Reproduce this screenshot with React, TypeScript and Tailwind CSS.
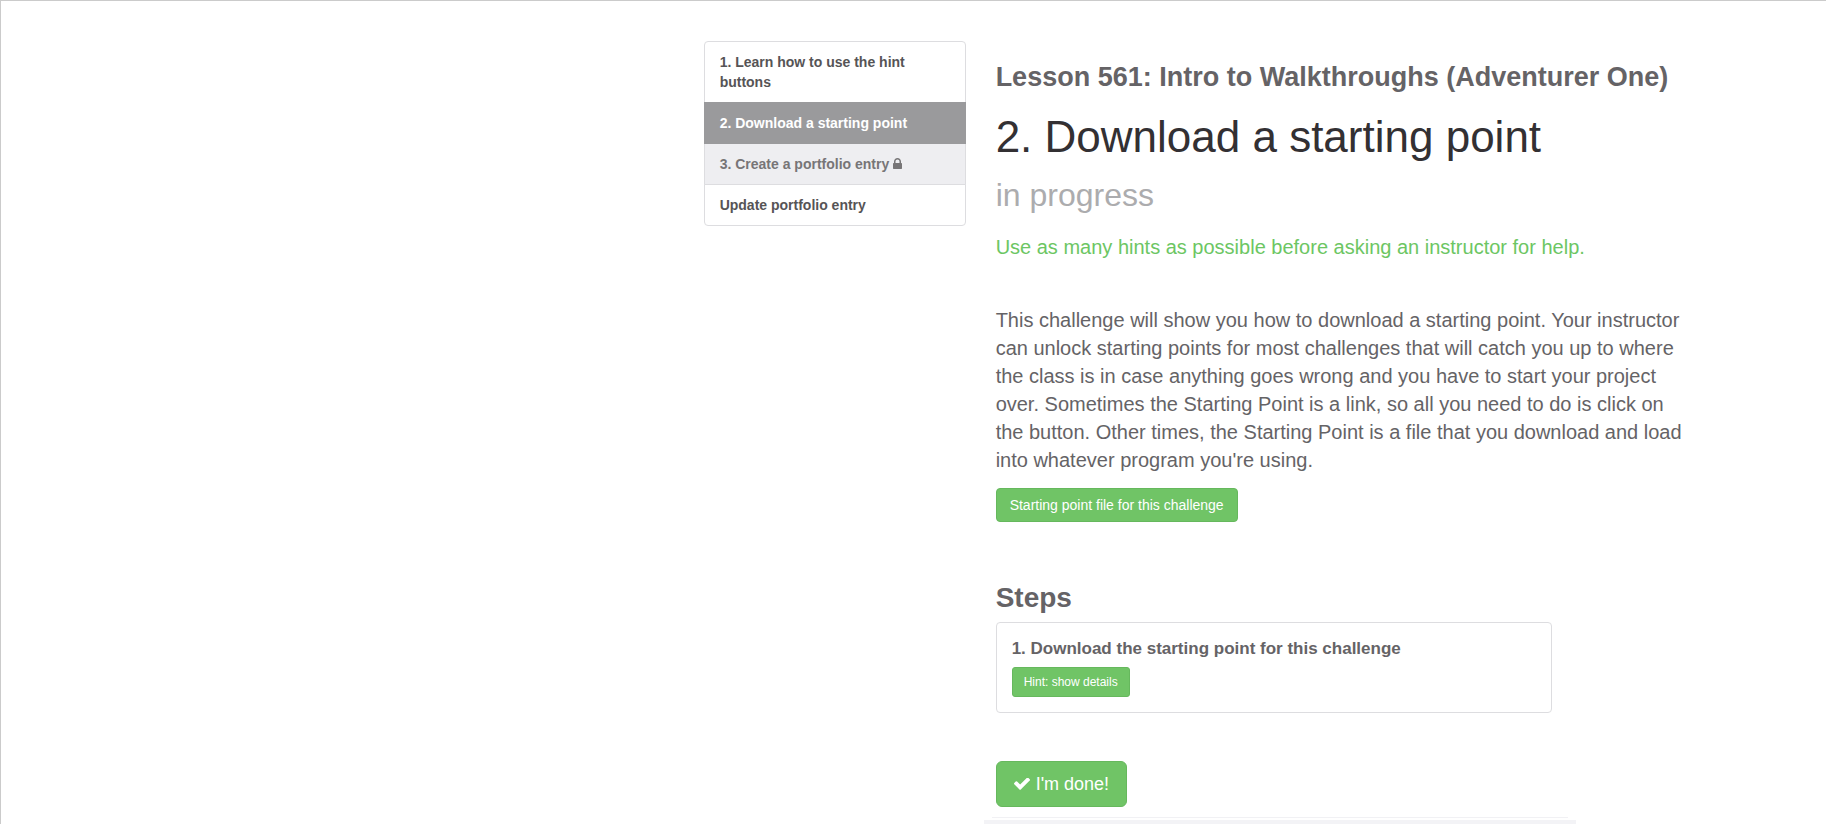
type Challenge = {
  label: string;
  state: "open" | "active" | "locked";
};

const challenges: Challenge[] = [
  { label: "1. Learn how to use the hint buttons", state: "open" },
  { label: "2. Download a starting point", state: "active" },
  { label: "3. Create a portfolio entry", state: "locked" },
  { label: "Update portfolio entry", state: "open" },
];

const itemStyles: Record<Challenge["state"], string> = {
  open: "border-[#dddde0] bg-white text-[#565456]",
  active: "relative border-[#9a9a9c] bg-[#9a9a9c] text-white",
  locked: "border-[#dddde0] bg-[#eeeef1] text-[#777577]",
};

function LockIcon() {
  return (
    <svg
      viewBox="320 128 1152 1408"
      fill="currentColor"
      aria-hidden="true"
      className="ml-1 inline h-[11px] w-[9px] align-baseline"
    >
      <path d="M640 768h512v-192q0-106-75-181t-181-75-181 75-75 181v192zm832 96v576q0 40-28 68t-68 28h-960q-40 0-68-28t-28-68v-576q0-40 28-68t68-28h32v-192q0-184 132-316t316-132 316 132 132 316v192h32q40 0 68 28t28 68z" />
    </svg>
  );
}

function CheckIcon() {
  return (
    <svg
      viewBox="121 402 1550 1120"
      fill="currentColor"
      aria-hidden="true"
      className="h-3 w-4"
    >
      <path d="M1671 566q0 40-28 68l-724 724-136 136q-28 28-68 28t-68-28l-136-136-362-362q-28-28-28-68t28-68l136-136q28-28 68-28t68 28l294 295 656-657q28-28 68-28t68 28l136 136q28 28 28 68z" />
    </svg>
  );
}

function ChallengeNav() {
  return (
    <nav className="w-[262px] shrink-0 pt-10">
      <ul>
        {challenges.map((challenge) => (
          <li key={challenge.label} className="group -mb-px">
            <a
              href="#"
              className={`block border px-[15px] py-2.5 text-sm leading-5 font-bold group-first:rounded-t group-last:rounded-b ${itemStyles[challenge.state]}`}
            >
              {challenge.label}
              {challenge.state === "locked" && <LockIcon />}
            </a>
          </li>
        ))}
      </ul>
    </nav>
  );
}

function Steps() {
  return (
    <section className="mt-15">
      <h3 className="text-[28px] leading-8 font-bold text-[#656366]">Steps</h3>
      <ol className="mt-2 max-w-[556px] rounded border border-[#dddde0]">
        <li className="px-[15px] pt-4 pb-[15px]">
          <h4 className="text-[17px] leading-5 font-bold text-[#656366]">
            1. Download the starting point for this challenge
          </h4>
          <button
            type="button"
            className="mt-2 block rounded-[3px] border border-[#66b85d] bg-[#70c466] px-[11px] text-xs leading-7 text-white"
          >
            Hint: show details
          </button>
        </li>
      </ol>
    </section>
  );
}

export default function App() {
  return (
    <div className="min-h-screen overflow-hidden border-t border-l border-[#cbcbcb] bg-white font-['Liberation_Sans',Arial,sans-serif]">
      <div className="flex gap-[30px] pl-[38.5%]">
        <ChallengeNav />

        <main className="min-w-0 flex-1 pt-15">
          <h2 className="text-[27px] leading-8 font-bold text-[#656366]">
            Lesson 561: Intro to Walkthroughs (Adventurer One)
          </h2>
          <h1 className="mt-5 text-[44px] leading-[48px] text-[#333033]">
            2. Download a starting point
          </h1>
          <p className="mt-3.5 text-[32px] leading-10 text-[#acacae]">in progress</p>
          <p className="mt-[18px] text-xl leading-7 text-[#6cc663]">
            Use as many hints as possible before asking an instructor for help.
          </p>

          <p className="mt-[45px] max-w-[698px] text-xl leading-7 text-[#656366]">
            This challenge will show you how to download a starting point. Your
            instructor can unlock starting points for most challenges that will
            catch you up to where the class is in case anything goes wrong and
            you have to start your project over. Sometimes the Starting Point is
            a link, so all you need to do is click on the button. Other times,
            the Starting Point is a file that you download and load into
            whatever program you're using.
          </p>
          <button
            type="button"
            className="mt-3.5 block rounded border border-[#66b85d] bg-[#70c466] px-[13px] text-sm leading-8 text-white"
          >
            Starting point file for this challenge
          </button>

          <Steps />

          <button
            type="button"
            className="mt-12 flex items-center gap-1.5 rounded-md border border-[#66b85d] bg-[#70c466] px-[17px] text-lg leading-[44px] text-white"
          >
            <CheckIcon />
            I'm done!
          </button>

          <div className="mt-2.5 -ml-3 h-[7px] max-w-[592px] px-2">
            <div className="h-px bg-[#f1f1f4]" />
            <div className="-mx-2 mt-0.5 h-1 bg-[#f3f3f6]" />
          </div>
        </main>
      </div>
    </div>
  );
}
